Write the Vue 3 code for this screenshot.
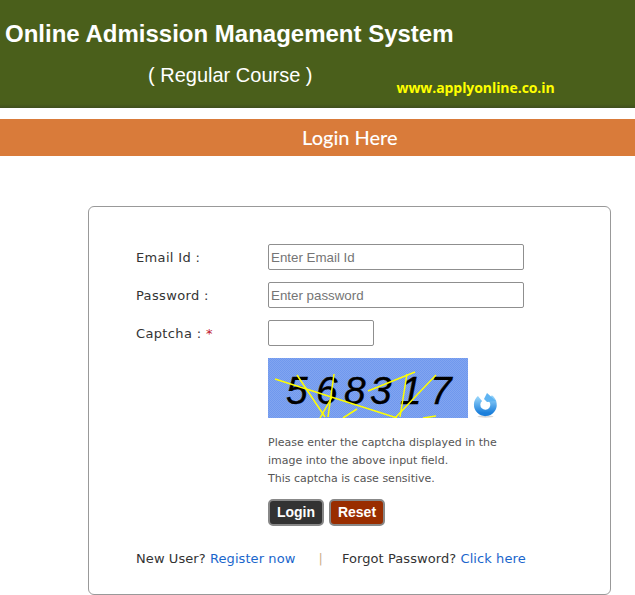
<script setup>
const lines = [
  [7, 21, 129, 60], [29, 17, 57, 59], [66, 16, 60, 59], [147, 14, 100, 33],
  [139, 16, 132, 59], [168, 17, 127, 60], [89, 51, 75, 60], [168, 58, 155, 60], [64, 39, 52, 60]
]
const digits = [
  { c: '5', x: 18 }, { c: '6', x: 48 }, { c: '8', x: 76 }, { c: '3', x: 102 }, { c: '1', x: 132 }, { c: '7', x: 162 }
]
</script>

<template>
  <div class="page">
    <header class="top">
      <h1>Online Admission Management System</h1>
      <div class="sub">
        <span class="course">( Regular Course )</span>
        <span class="url">www.applyonline.co.in</span>
      </div>
    </header>
    <div class="band">Login Here</div>
    <main class="card">
      <div class="row">
        <label>Email Id :</label>
        <input type="text" placeholder="Enter Email Id" />
      </div>
      <div class="row">
        <label>Password :</label>
        <input type="password" placeholder="Enter password" />
      </div>
      <div class="row">
        <label>Captcha : <span class="req">*</span></label>
        <input class="short" type="text" />
      </div>
      <div class="captcha">
        <svg width="200" height="60" viewBox="0 0 200 60" class="cap-img">
          <defs>
            <pattern id="dither" width="2" height="2" patternUnits="userSpaceOnUse">
              <rect width="2" height="2" fill="#82a5f0" />
              <rect width="1" height="1" fill="#6f98ee" />
              <rect x="1" y="1" width="1" height="1" fill="#6f98ee" />
            </pattern>
          </defs>
          <rect width="200" height="60" fill="url(#dither)" />
          <text v-for="d in digits" :key="d.c" :x="d.x" y="46" class="digit">{{ d.c }}</text>
          <line v-for="(l, i) in lines" :key="i" :x1="l[0]" :y1="l[1]" :x2="l[2]" :y2="l[3]" stroke="#ffff00" stroke-width="1.5" />
        </svg>
        <svg width="26" height="26" viewBox="0 0 26 26" class="refresh">
          <defs>
            <linearGradient id="ring" x1="0" y1="0" x2="0" y2="1">
              <stop offset="0" stop-color="#8fd0f9" />
              <stop offset="1" stop-color="#1b7fdb" />
            </linearGradient>
          </defs>
          <ellipse cx="12.5" cy="24.5" rx="8" ry="1.2" fill="#d8d8d8" />
          <path d="M17 6A8.2 8.2 0 1 1 7 6.5" fill="none" stroke="url(#ring)" stroke-width="6.4" />
          <path d="M11 7L14 1L23 9L14 10Z" fill="#5fb4f2" />
        </svg>
      </div>
      <p class="help">Please enter the captcha displayed in the<br />image into the above input field.<br />This captcha is case sensitive.</p>
      <div class="buttons">
        <button class="login" type="button">Login</button>
        <button class="reset" type="button">Reset</button>
      </div>
      <div class="links">
        <span>New User? <a href="#">Register now</a></span>
        <span class="sep">|</span>
        <span>Forgot Password? <a href="#">Click here</a></span>
      </div>
    </main>
  </div>
</template>

<style>
html, body { margin: 0; background: #fff; }
</style>

<style scoped>
.page { width: 635px; height: 595px; overflow: hidden; font-family: "DejaVu Sans", Verdana, sans-serif; }
.top {
  height: 108px;
  box-sizing: border-box;
  padding: 20px 0 0 5px;
  background: linear-gradient(#4a5f1b 0, #4a5f1b 104px, #3f4f1e 108px);
  font-family: "Liberation Sans", Arial, sans-serif;
  color: #fff;
}
h1 { margin: 0; font-size: 24px; line-height: 28px; font-weight: 700; }
.sub { display: flex; margin-top: 14px; padding-left: 143px; }
.course { font-size: 20px; line-height: 26px; }
.url {
  margin: 16px 0 0 84px;
  font-family: "Open Sans", sans-serif;
  font-size: 14px;
  line-height: 20px;
  font-weight: 700;
  letter-spacing: -0.07px;
  color: #ffff00;
}
.band {
  margin-top: 11px;
  height: 37px;
  background: #d97b3a;
  color: #fff;
  font-family: Lato, sans-serif;
  font-size: 20px;
  font-weight: 500;
  line-height: 37px;
  padding-left: 302px;
}
.card {
  box-sizing: border-box;
  width: 523px;
  height: 389px;
  margin: 50px 0 0 88px;
  padding: 37px 0 0 47px;
  border: 1px solid #999;
  border-radius: 6px;
  font-size: 13px;
  color: #333;
}
.row { display: flex; align-items: center; height: 26px; margin-bottom: 12px; }
label { width: 132px; letter-spacing: 0.35px; color: #333; }
.req { color: #c0162c; }
input {
  box-sizing: border-box;
  width: 256px;
  height: 26px;
  padding: 0 2px;
  border: 1px solid #8f8f8f;
  border-radius: 2px;
  font-family: "Liberation Sans", Arial, sans-serif;
  font-size: 13.33px;
  outline: none;
}
input::placeholder { color: #757575; }
input.short { width: 106px; }
.captcha { display: flex; align-items: flex-end; margin-left: 132px; height: 60px; }
.cap-img { display: block; }
.digit { font-family: "Liberation Sans", sans-serif; font-style: italic; font-size: 39px; fill: #000; stroke: #000; stroke-width: 0.3; }
.refresh { margin: 0 0 0 5px; }
.help { margin: 16px 0 0 132px; font-size: 11px; line-height: 18px; color: #555; }
.buttons { display: flex; gap: 5px; margin: 11px 0 0 132px; }
button {
  box-sizing: border-box;
  width: 56px;
  height: 27px;
  padding: 0 0 2px;
  border: 2px solid #888;
  border-radius: 5px;
  color: #fff;
  font-family: "Liberation Sans", Arial, sans-serif;
  font-size: 14px;
  font-weight: 700;
}
.login { background: #333; }
.reset { background: #992d00; }
.links { display: flex; margin-top: 24px; line-height: 18px; letter-spacing: 0.08px; }
.links a { color: #1a66cc; text-decoration: none; }
.sep { margin: 0 19px 0 23px; color: #cfae8a; }
</style>
